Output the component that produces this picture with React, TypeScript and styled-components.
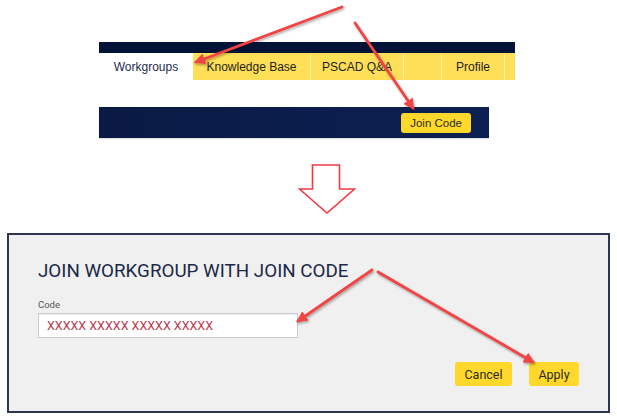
import React from 'react';
import styled, { createGlobalStyle } from 'styled-components';

const GlobalStyle = createGlobalStyle`
  * { box-sizing: border-box; }
  html, body { margin: 0; padding: 0; background: #ffffff; }
  body { font-family: Roboto, "Liberation Sans", Arial, sans-serif; }
`;

type Tab = { label: string; width: number; active?: boolean };

const tabs: Tab[] = [
  { label: 'Workgroups', width: 94, active: true },
  { label: 'Knowledge Base', width: 117 },
  { label: 'PSCAD Q&A', width: 93 },
  { label: '', width: 38 },
  { label: 'Profile', width: 63 },
  { label: '', width: 11 },
];

type Arrow = { x1: number; y1: number; x2: number; y2: number };

const arrows: Arrow[] = [
  { x1: 342, y1: 7, x2: 196, y2: 62 },
  { x1: 355, y1: 23, x2: 413, y2: 108 },
  { x1: 372, y1: 270, x2: 298, y2: 321 },
  { x1: 378, y1: 272, x2: 533, y2: 362 },
];

const App: React.FC = () => {
  return (
    <>
      <GlobalStyle />
      <Page>
        <NavMockup>
          <TopStrip />
          <TabRow>
            {tabs.map((tab, i) => (
              <TabItem key={i} $width={tab.width} $active={tab.active}>
                {tab.label}
              </TabItem>
            ))}
          </TabRow>
          <ActionBar>
            <YellowButton $small>Join Code</YellowButton>
          </ActionBar>
        </NavMockup>

        <DownArrow viewBox="0 0 58 50" width="58" height="50">
          <polygon
            points="14.5,1 41.5,1 41.5,25 56.5,25 29,49 1.5,25 14.5,25"
            fill="#ffffff"
            stroke="#ef3b43"
            strokeWidth="1.6"
          />
        </DownArrow>

        <Dialog>
          <Title>JOIN WORKGROUP WITH JOIN CODE</Title>
          <FieldLabel>Code</FieldLabel>
          <CodeInput>XXXXX XXXXX XXXXX XXXXX</CodeInput>
          <ButtonRow>
            <YellowButton $width={57}>Cancel</YellowButton>
            <YellowButton $width={50}>Apply</YellowButton>
          </ButtonRow>
        </Dialog>

        <Annotations viewBox="0 0 617 417" width="617" height="417">
          <defs>
            <filter id="shadow" x="-20%" y="-20%" width="140%" height="140%">
              <feDropShadow dx="1" dy="1.5" stdDeviation="1" floodColor="#000" floodOpacity="0.35" />
            </filter>
            <marker id="head" viewBox="0 0 10 10" refX="8" refY="5" markerWidth="4" markerHeight="4" orient="auto-start-reverse">
              <path d="M0,0 L10,5 L0,10 z" fill="#ef4444" />
            </marker>
          </defs>
          <g filter="url(#shadow)">
            {arrows.map((a, i) => (
              <line
                key={i}
                x1={a.x1}
                y1={a.y1}
                x2={a.x2}
                y2={a.y2}
                stroke="#ef4444"
                strokeWidth="2.8"
                strokeLinecap="round"
                markerEnd="url(#head)"
              />
            ))}
          </g>
        </Annotations>
      </Page>
    </>
  );
};

const Page = styled.div`
  position: relative;
  width: 617px;
  height: 417px;
  overflow: hidden;
  display: flex;
  flex-direction: column;
`;

const NavMockup = styled.div`
  margin: 42px 0 0 99px;
  width: 416px;
  display: flex;
  flex-direction: column;
  font-family: "Liberation Sans", Arial, sans-serif;
`;

const TopStrip = styled.div`
  height: 11px;
  background: #031338;
`;

const TabRow = styled.div`
  display: flex;
  height: 27px;
`;

const TabItem = styled.div<{ $width: number; $active?: boolean }>`
  width: ${({ $width }) => $width}px;
  display: flex;
  align-items: center;
  justify-content: center;
  font-size: 12px;
  color: ${({ $active }) => ($active ? '#1d2a4c' : '#1e1e1e')};
  background: ${({ $active }) => ($active ? '#ffffff' : '#ffdf57')};
  border-left: ${({ $active }) => ($active ? 'none' : '1px solid #fff0a8')};
  &:nth-child(2) { border-left: none; }
`;

const ActionBar = styled.div`
  margin-top: 27px;
  width: 390px;
  height: 31px;
  display: flex;
  align-items: center;
  justify-content: flex-end;
  padding-right: 18px;
  background: linear-gradient(to right, #0a1a44, #0c2052);
  box-shadow: 0 1px 1px rgba(0, 0, 0, 0.12);
`;

const YellowButton = styled.div<{ $small?: boolean; $width?: number }>`
  display: flex;
  align-items: center;
  justify-content: center;
  width: ${({ $width }) => ($width ? `${$width}px` : 'auto')};
  height: ${({ $small }) => ($small ? '20px' : '24px')};
  padding: ${({ $small }) => ($small ? '0 9px' : '0')};
  background: #ffd82b;
  border-radius: 3px;
  color: #2b2b2b;
  font-family: ${({ $small }) => ($small ? '"Liberation Sans", Arial' : 'Roboto, Arial')}, sans-serif;
  font-size: ${({ $small }) => ($small ? '11.5px' : '12.5px')};
`;

const DownArrow = styled.svg`
  display: block;
  margin: 26px 0 0 298px;
`;

const Dialog = styled.div`
  margin: 19px 0 0 7px;
  width: 603px;
  height: 180px;
  border: 2px solid #2c3652;
  background: #f0f0f0;
  padding: 26px 29px 0 29px;
  display: flex;
  flex-direction: column;
  font-family: Roboto, Arial, sans-serif;
`;

const Title = styled.div`
  font-size: 18.8px;
  line-height: 20px;
  color: #1b2848;
`;

const FieldLabel = styled.div`
  margin-top: 18px;
  font-size: 9.5px;
  line-height: 12px;
  color: #555;
`;

const CodeInput = styled.div`
  margin-top: 2px;
  width: 260px;
  height: 25px;
  display: flex;
  align-items: center;
  padding-left: 8px;
  background: #ffffff;
  border: 1px solid #c6c9cf;
  box-shadow: inset 0 1px 1px rgba(0, 0, 0, 0.06);
  font-size: 12.5px;
  color: #b5394d;
`;

const ButtonRow = styled.div`
  margin-top: 24px;
  display: flex;
  justify-content: flex-end;
  gap: 17px;
`;

const Annotations = styled.svg`
  position: absolute;
  left: 0;
  top: 0;
  pointer-events: none;
`;

export default App;
